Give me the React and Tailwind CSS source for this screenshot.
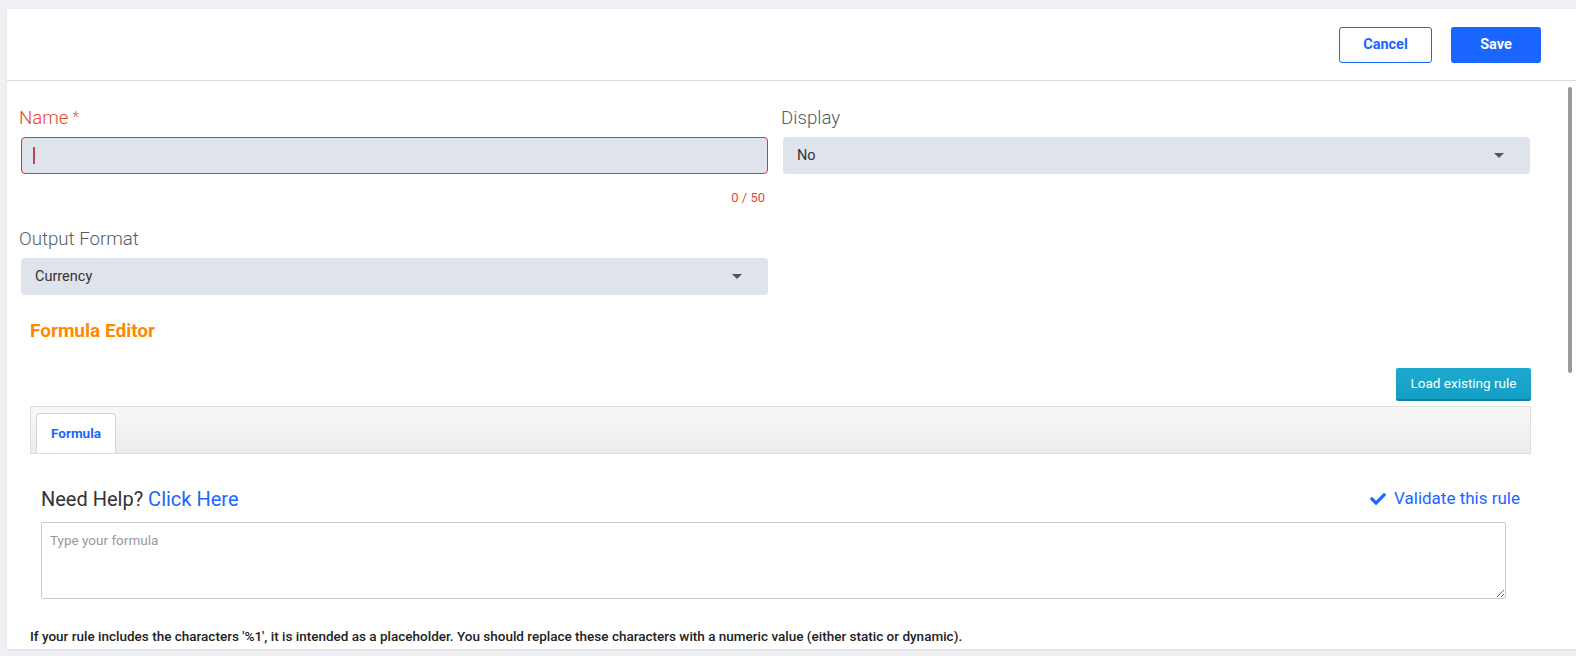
import { FaCheck } from "react-icons/fa";

function Caret() {
	return <svg width="10" height="6" viewBox="0 0 10 6" className="text-[#555]">
		<path d="M0 0 L10 0 L5 5 Z" fill="currentColor" />
	</svg>;
}

function Select({ value }) {
	return <div className="mx-[2px] h-[37px] rounded-[4px] bg-[#dfe3eb] flex items-center justify-between pl-[14px] pr-[26px] text-[14.5px] text-[#333]">
		<span>{value}</span>
		<Caret />
	</div>;
}

export default function App() {
	return <div className="w-full h-screen overflow-hidden bg-[#eff0f3] pt-[9px] pl-[7px] font-['Roboto',sans-serif]">
		<div className="relative w-[1569px] h-[640px] bg-white shadow-[0_1px_3px_rgba(0,0,0,0.08)] flex flex-col overflow-hidden">
			{/* header */}
			<div className="h-[72px] shrink-0 border-b border-[#dcdcdc] flex items-center justify-end gap-[19px] pr-[35px] pt-[1px]">
				<button className="w-[93px] h-[36px] rounded-[3px] border border-[#1a66ff] text-[#1a66ff] text-[14.5px] font-bold">Cancel</button>
				<button className="w-[90px] h-[36px] rounded-[3px] bg-[#1a66ff] text-white text-[14.5px] font-bold">Save</button>
			</div>

			{/* scroll thumb */}
			<div className="absolute left-[1561px] top-[78px] w-[4px] h-[286px] rounded-[2px] bg-[#9a9a9a]" />

			<div className="flex-1 overflow-hidden pl-[12px]">
				<div className="grid grid-cols-[751px_751px] gap-x-[11px] pt-[25px]">
					<div>
						<div className="h-[24px] leading-[24px] text-[18.7px] font-light text-[#e8472f] flex items-start">
							Name<span className="text-[15px] ml-[4px] leading-[22px]">*</span>
						</div>
						<div className="mt-[7px] mx-[2px] h-[37px] rounded-[4px] bg-[#dfe3eb] border border-[#e8302a] flex items-center pl-[11px]">
							<span className="w-[2px] h-[17px] bg-[#b84a4a]" />
						</div>
						<div className="mt-[16px] h-[16px] leading-[16px] text-[13px] text-[#e8472f] text-right pr-[5px]">0 / 50</div>
					</div>
					<div>
						<div className="h-[24px] leading-[24px] text-[18.7px] font-light text-[#555b66]">Display</div>
						<div className="mt-[7px]"><Select value="No" /></div>
					</div>
				</div>

				<div className="w-[751px] mt-[21px]">
					<div className="h-[24px] leading-[24px] text-[18.7px] font-light text-[#555b66]">Output Format</div>
					<div className="mt-[7px]"><Select value="Currency" /></div>
				</div>

				<div className="pl-[11px] w-[1512px]">
					<div className="mt-[24px] h-[24px] leading-[24px] text-[19px] font-bold text-[#ff8a00]">Formula Editor</div>
					<div className="mt-[25px] flex justify-end">
						<button className="w-[135px] h-[33px] rounded-[2px] bg-gradient-to-b from-[#1eaad0] to-[#139fc4] border-b-2 border-[#0c86a6] text-white text-[13.5px]">Load existing rule</button>
					</div>
					<div className="mt-[5px] h-[48px] border border-[#dedede] bg-gradient-to-b from-[#f7f7f7] to-[#ececec] flex items-end pl-[5px]">
						<div className="w-[80px] h-[40px] bg-white border border-b-0 border-[#d6d6d6] rounded-t-[4px] flex items-center justify-center text-[13.5px] font-bold text-[#1a66ff]">Formula</div>
					</div>

					<div className="pl-[11px] pr-[11px]">
						<div className="mt-[33px] flex items-center justify-between h-[24px]">
							<div className="text-[20px] text-[#333]">Need Help? <span className="text-[#1a66ff]">Click Here</span></div>
							<div className="flex items-center gap-[8px] text-[17px] text-[#1a66ff]">
								<FaCheck size={16} />
								<span>Validate this rule</span>
							</div>
						</div>
						<textarea
							className="mt-[11px] block w-[1465px] h-[77px] rounded-[2px] border border-[#cccccc] px-[8px] py-[7px] text-[13.5px] text-[#333] placeholder:text-[#999] outline-none resize-y"
							placeholder="Type your formula"
						/>
					</div>
				</div>

				<div className="mt-[28px] pl-[11px] text-[13.5px] leading-[18px] font-medium text-[#222]">
					If your rule includes the characters '%1', it is intended as a placeholder. You should replace these characters with a numeric value (either static or dynamic).
				</div>
			</div>
		</div>
	</div>;
}
